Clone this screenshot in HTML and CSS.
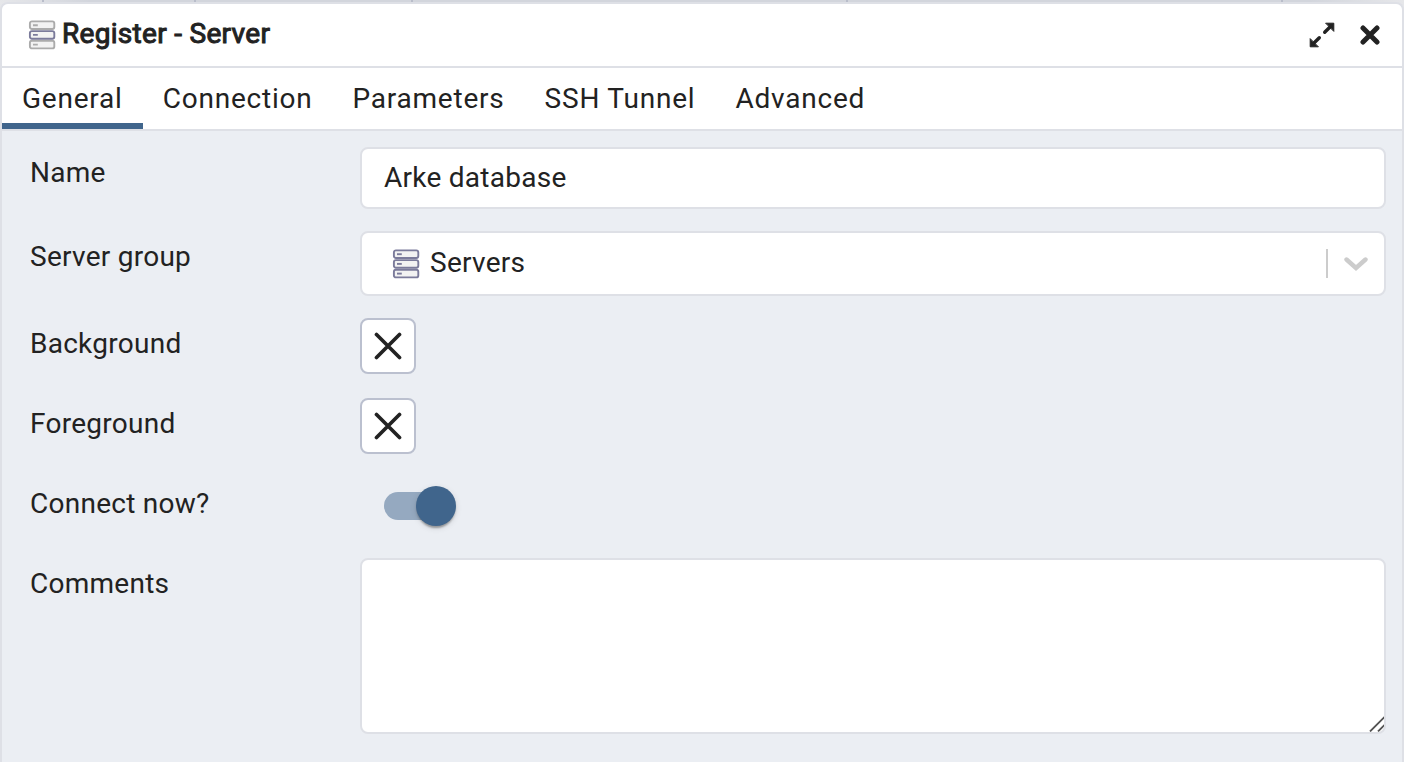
FILE: index.html
```html
<!DOCTYPE html>
<html lang="en">
<head>
<meta charset="utf-8">
<title>Register - Server</title>
<link rel="stylesheet" href="styles.css">
</head>
<body>
<div class="backdrop">
  <i class="tick tick-a"></i><i class="tick tick-b"></i><i class="tick tick-c"></i><i class="tick tick-d"></i><i class="tick tick-e"></i>
</div>
<main class="dialog">
  <header class="header">
    <svg class="server-icon" width="28" height="30" viewBox="0 0 28 30" fill="#f2f2f2" stroke-width="1.9">
      <g stroke="#ababab"><rect x="1.9" y="1.4" width="24.4" height="7.6" rx="2"/><path d="M5 5.2h4.8"/></g>
      <g stroke="#ababab"><rect x="1.9" y="20.8" width="24.4" height="7.6" rx="2"/><path d="M5 24.6h4.8"/></g>
      <g stroke="#7b7b9b"><rect x="1.9" y="11.1" width="24.4" height="7.6" rx="2"/><path d="M5 14.9h4.8"/></g>
    </svg>
    <h1 class="title">Register - Server</h1>
    <div class="actions">
      <svg width="26" height="26" viewBox="0 0 26 26" fill="#222" stroke="#222" stroke-linecap="round" stroke-linejoin="round">
        <path d="M15.7 10.3L21 5M10.3 15.7L5 21" stroke-width="3.4"/>
        <path d="M17 1.2h7.8v7.8zM1.2 17v7.8H9z" stroke-width="1"/>
      </svg>
      <svg width="20" height="20" viewBox="0 0 20 20" fill="none" stroke="#222" stroke-width="5" stroke-linecap="round"><path d="M3 3l14 14M17 3L3 17"/></svg>
    </div>
  </header>
  <nav class="tabs">
    <span class="tab active">General</span><span class="tab">Connection</span><span class="tab">Parameters</span><span class="tab">SSH Tunnel</span><span class="tab">Advanced</span>
  </nav>
  <form class="form">
    <div class="row row-name"><label class="label">Name</label><div class="field input">Arke database</div></div>
    <div class="row row-group"><label class="label">Server group</label>
      <div class="field select">
        <svg class="server-icon" width="28" height="30" viewBox="0 0 28 30" fill="#f2f2f2" stroke="#7b7b9b" stroke-width="1.9">
          <rect x="1.9" y="1.4" width="24.4" height="7.6" rx="2"/><path d="M5 5.2h4.8"/>
          <rect x="1.9" y="11.1" width="24.4" height="7.6" rx="2"/><path d="M5 14.9h4.8"/>
          <rect x="1.9" y="20.8" width="24.4" height="7.6" rx="2"/><path d="M5 24.6h4.8"/>
        </svg>
        <span class="value">Servers</span>
        <i class="separator"></i>
        <svg class="chevron" width="24" height="14" viewBox="0 0 24 14" fill="none" stroke="#ccc" stroke-width="4.4" stroke-linecap="round"><path d="M2.5 2.5L12 11L21.5 2.5"/></svg>
      </div>
    </div>
    <div class="row row-color"><label class="label">Background</label>
      <div class="swatch"><svg width="28" height="28" viewBox="0 0 28 28" stroke="#222" stroke-width="3.7" stroke-linecap="round"><path d="M2.5 2.5l23 23M25.5 2.5l-23 23"/></svg></div></div>
    <div class="row row-color"><label class="label">Foreground</label>
      <div class="swatch"><svg width="28" height="28" viewBox="0 0 28 28" stroke="#222" stroke-width="3.7" stroke-linecap="round"><path d="M2.5 2.5l23 23M25.5 2.5l-23 23"/></svg></div></div>
    <div class="row row-switch"><label class="label">Connect now?</label><div class="switch"><i class="thumb"></i></div></div>
    <div class="row row-comments"><label class="label">Comments</label>
      <div class="field textarea"><svg class="grip" width="16" height="16" viewBox="0 0 16 16" stroke="#555" stroke-width="1.8"><path d="M2 15.5L17 .5M10 15.5L17 8.5"/></svg></div></div>
  </form>
</main>
</body>
</html>
```
FILE: styles.css
```css
* { box-sizing: border-box; }
body {
  margin: 0;
  height: 762px;
  overflow: hidden;
  display: flex;
  flex-direction: column;
  background: #dee0e6;
  color: #222;
  font: 28px/40px Roboto, sans-serif;
}
.backdrop {
  position: absolute;
  inset: 0 0 auto;
  height: 12px;
  background: linear-gradient(90deg, #e6e7ea, #d2d5dc 90px, #d2d5dc 1310px, #e6e7ea);
}
.tick { position: absolute; top: 0; width: 2px; height: 2px; background: #b9bdca; }
.tick-a { left: 42px; }
.tick-b { left: 194px; }
.tick-c { left: 411px; }
.tick-d { left: 846px; }
.tick-e { left: 1281px; }
.dialog {
  position: relative;
  flex: 1;
  display: flex;
  flex-direction: column;
  margin-top: 2px;
  border: 2px solid #dee0e6;
  border-bottom: 0;
  border-radius: 8px 8px 0 0;
  background: #ebeef3;
  overflow: hidden;
}
.header {
  display: flex;
  align-items: center;
  height: 64px;
  padding: 0 22px 0 26px;
  background: #fff;
  border-bottom: 2px solid #dee0e6;
}
.title {
  margin: 0 0 2px 6px;
  font-size: 28px;
  font-weight: 400;
  letter-spacing: 0.3px;
  -webkit-text-stroke: 1px #222;
}
.actions { display: flex; align-items: center; gap: 25px; margin: 0 0 1px auto; }
.tabs {
  display: flex;
  height: 63px;
  background: #fff;
  border-bottom: 2px solid #dee0e6;
}
.tab {
  height: 61px;
  padding: 10px 20px;
  letter-spacing: 0.78px;
  border-bottom: 6px solid transparent;
  line-height: 41px;
}
.active { border-bottom-color: #40658c; }
.form { display: flex; flex-direction: column; padding: 16px 16px 0 28px; }
.row { display: flex; align-items: flex-start; letter-spacing: 0.26px; }
.label { width: 330px; padding-top: 6px; flex: none; }
.field {
  flex: 1;
  border: 2px solid #dee0e6;
  border-radius: 8px;
  background: #fff;
}
.row-name { height: 84px; }
.input { height: 62px; padding: 9px 22px 7px; }
.row-group { height: 87px; }
.select { display: flex; align-items: center; height: 65px; padding: 0 16px 0 30px; }
.value { margin: 0 auto 2px 10px; }
.separator { width: 2px; height: 29px; background: #ccc; margin-right: 16px; }
.row-color { height: 80px; }
.swatch {
  display: grid;
  place-items: center;
  width: 56px;
  height: 56px;
  border: 2px solid #bbc0cf;
  border-radius: 8px;
  background: #fff;
}
.row-switch { height: 80px; }
.switch {
  display: flex;
  align-items: center;
  width: 72px;
  height: 40px;
  margin: 8px 0 0 24px;
}
.switch::before {
  content: "";
  flex: none;
  width: 52px;
  height: 28px;
  margin-right: -20px;
  border-radius: 14px;
  background: #95a9c0;
}
.thumb {
  position: relative;
  flex: none;
  width: 40px;
  height: 40px;
  border-radius: 50%;
  background: #40658c;
  box-shadow: 0 4px 2px -2px rgba(0,0,0,.2), 0 2px 2px rgba(0,0,0,.14), 0 2px 6px rgba(0,0,0,.12);
}
.textarea {
  display: flex;
  align-items: flex-end;
  justify-content: flex-end;
  height: 176px;
  overflow: hidden;
}
```
